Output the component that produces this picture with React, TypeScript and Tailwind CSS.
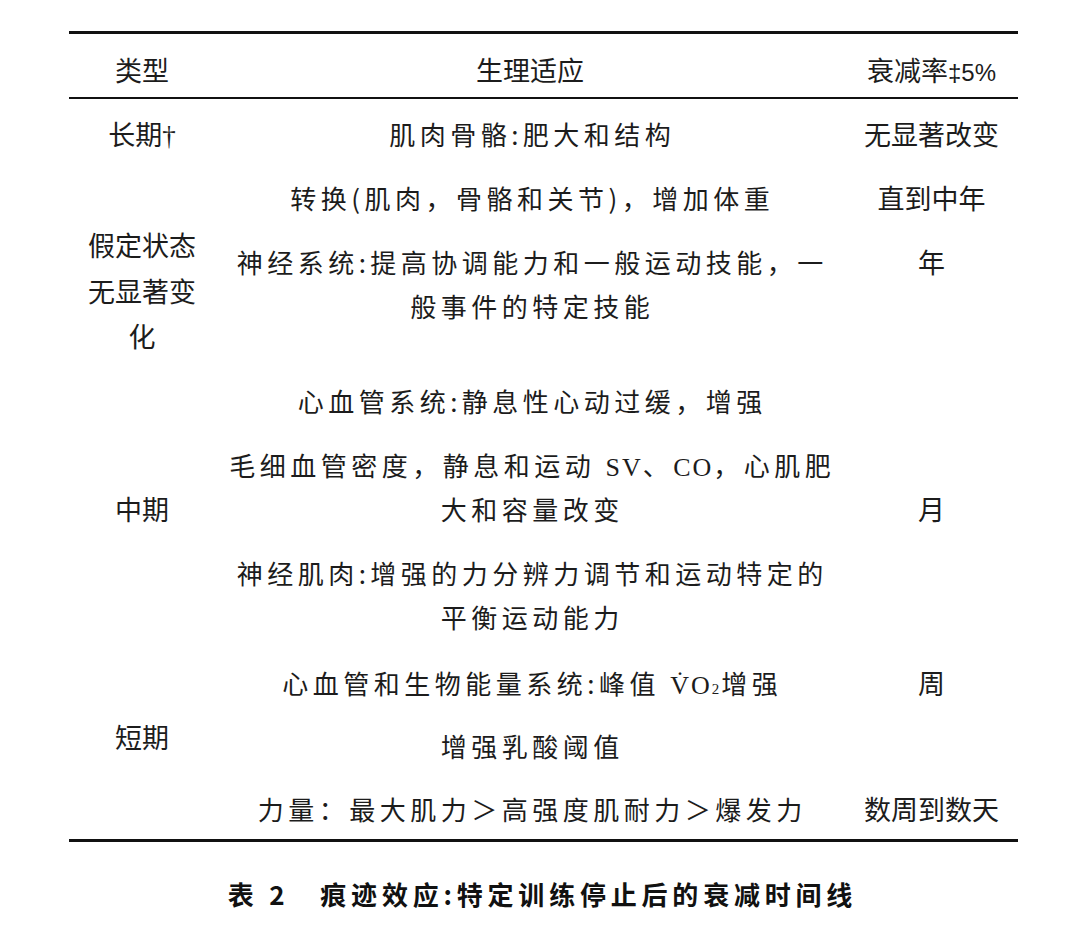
const CJK = "font-['Noto_Sans_CJK_SC','Noto_Sans',sans-serif]";
const COLS = "grid grid-cols-[146px_630px_173px]";

function Side({ children, className = "" }: { children: React.ReactNode; className?: string }) {
  return (
    <div className={`text-center text-[27px] leading-[44px] whitespace-nowrap ${className}`}>
      {children}
    </div>
  );
}

function Mid({ children, className = "" }: { children: React.ReactNode; className?: string }) {
  return (
    <div
      className={`text-center text-[26px] leading-[44px] tracking-[4.5px] pl-[4.5px] whitespace-nowrap ${className}`}
    >
      {children}
    </div>
  );
}

const latin = "font-['Liberation_Serif',serif] tracking-[2px] leading-none";

export default function App() {
  return (
    <div className={`min-h-[936px] w-[1080px] bg-white text-[#1c1c1c] ${CJK}`}>
      <div className="ml-[69px] w-[949px] pt-[31px]">
        <div className="border-t-[3px] border-[#111]" />
        <div className={`${COLS} h-[63px] pt-[14px]`}>
          <Side>类型</Side>
          <Side>生理适应</Side>
          <Side>
            衰减率<span className="font-['Liberation_Sans',sans-serif] text-[24px] leading-none">‡5%</span>
          </Side>
        </div>
        <div className="border-t-2 border-[#111]" />

        <div className="pt-[13px] pb-[8px]">
          {/* 长期 */}
          <div className={`${COLS} h-[44px]`}>
            <Side>
              长期<span className="font-['Liberation_Serif',serif] leading-none">†</span>
            </Side>
            <Mid>肌肉骨骼:肥大和结构</Mid>
            <Side>无显著改变</Side>
          </div>

          {/* 假定状态 */}
          <div className={`${COLS} mt-[20px]`}>
            <Side className="pt-[46px] leading-[45.5px] whitespace-normal">
              假定状态
              <br />
              无显著变
              <br />化
            </Side>
            <div className="flex flex-col gap-[20px]">
              <Mid>转换(肌肉，骨骼和关节)，增加体重</Mid>
              <Mid>
                神经系统:提高协调能力和一般运动技能，一
                <br />
                般事件的特定技能
              </Mid>
            </div>
            <div className="flex flex-col gap-[20px]">
              <Side>直到中年</Side>
              <Side>年</Side>
            </div>
          </div>

          {/* 中期 */}
          <div className={`${COLS} mt-[20px] items-center`}>
            <Side>中期</Side>
            <div className="flex flex-col gap-[20px]">
              <Mid>心血管系统:静息性心动过缓，增强</Mid>
              <Mid className="h-[88px]">
                毛细血管密度，静息和运动 <span className={latin}>SV</span>、<span className={latin}>CO</span>，心肌肥
                <br />
                大和容量改变
              </Mid>
              <Mid>
                神经肌肉:增强的力分辨力调节和运动特定的
                <br />
                平衡运动能力
              </Mid>
            </div>
            <Side>月</Side>
          </div>

          {/* 短期 */}
          <div className={`${COLS} mt-[22px]`}>
            <Side className="pt-[54px]">短期</Side>
            <div className="flex flex-col gap-[19px]">
              <Mid className="h-[44px]">
                心血管和生物能量系统:峰值{" "}
                <span className={latin}>
                  V̇O<span className="text-[15px] leading-none">2</span>
                </span>
                增强
              </Mid>
              <Mid>增强乳酸阈值</Mid>
              <Mid>力量：最大肌力＞高强度肌耐力＞爆发力</Mid>
            </div>
            <div className="flex flex-col gap-[19px]">
              <Side>周</Side>
              <Side>&nbsp;</Side>
              <Side>数周到数天</Side>
            </div>
          </div>
        </div>
        <div className="border-t-[3px] border-[#111]" />
      </div>
      <p className="mt-[36px] pl-[5px] text-center text-[26px] leading-[32px] font-bold tracking-[4.8px] text-[#111]">
        表 2　痕迹效应:特定训练停止后的衰减时间线
      </p>
    </div>
  );
}
